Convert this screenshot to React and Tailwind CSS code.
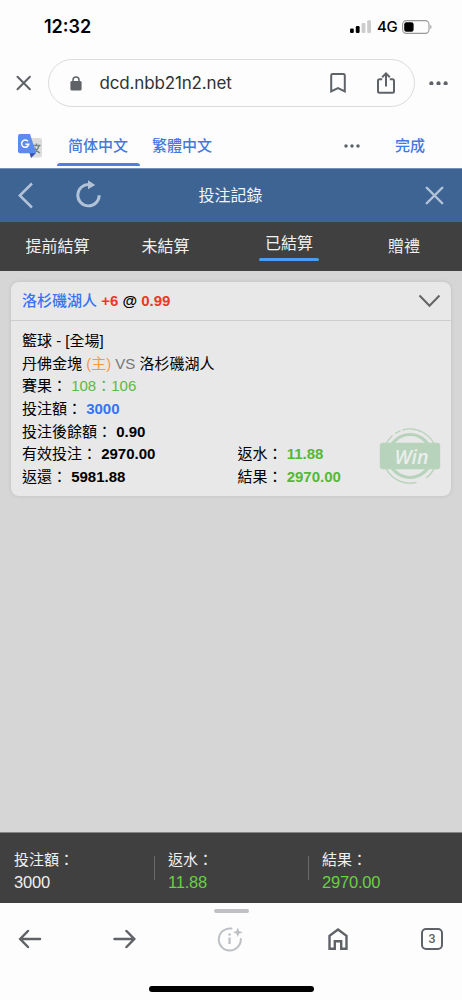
import { X } from "lucide-react";

// --- BROWSER CHROME ---
function StatusBar() {
  return (
    <div className="flex h-[53px] items-center justify-between pl-[44px] pr-[29px]">
      <span className="font-['Inter'] text-[18px] font-semibold leading-none text-black">12:32</span>
      <div className="flex items-center">
        <svg width="21" height="14" viewBox="0 0 21 14">
          <rect x="0" y="8.5" width="3.8" height="4.5" rx="1.2" fill="#000" />
          <rect x="5.8" y="6" width="3.8" height="7" rx="1.2" fill="#000" />
          <rect x="11.6" y="3" width="3.8" height="10" rx="1.2" fill="#ccc" />
          <rect x="17.2" y="0.2" width="3.8" height="12.8" rx="1.2" fill="#ccc" />
        </svg>
        <span className="ml-[6px] w-[25px] font-['Inter'] text-[15px] font-medium leading-none tracking-[-0.3px] text-black">4G</span>
        <svg width="31" height="14" viewBox="0 0 31 14">
          <rect x="0.6" y="0.6" width="26.4" height="12.8" rx="3.8" fill="none" stroke="#999" strokeWidth="1.1" />
          <rect x="2.2" y="2.2" width="9.4" height="9.6" rx="2.2" fill="#000" />
          <path d="M28.4 4.8c1.4.5 1.4 3.9 0 4.4z" fill="#999" />
        </svg>
      </div>
    </div>
  );
}

function Dots({ size }) {
  return (
    <svg width={size} height={size / 4} viewBox="0 0 20 5" fill="#5f6368">
      <circle cx="2.5" cy="2.5" r="2.2" />
      <circle cx="10" cy="2.5" r="2.2" />
      <circle cx="17.5" cy="2.5" r="2.2" />
    </svg>
  );
}

function AddressBar() {
  return (
    <div className="flex h-[60px] items-center">
      <div className="flex w-[47.5px] justify-center">
        <svg width="16" height="16" viewBox="0 0 16 16" stroke="#5f6368" strokeWidth="2" strokeLinecap="round">
          <path d="M1.5 1.8l12.4 12.4M13.9 1.8L1.5 14.2" />
        </svg>
      </div>
      <div className="flex h-[48px] w-[367px] items-center rounded-full border border-[#dadce0] pl-[21px] pr-[17px]">
        <svg width="12" height="15" viewBox="0 0 12 15">
          <rect x="0.4" y="5" width="11.2" height="9.4" rx="1.5" fill="#5f6368" />
          <path d="M3 5.5V4a3 3 0 0 1 6 0v1.5" fill="none" stroke="#5f6368" strokeWidth="1.5" />
        </svg>
        <span className="ml-[18px] font-['Inter'] text-[17px] leading-none tracking-[-0.15px] text-[#303134]">dcd.nbb21n2.net</span>
        <svg className="ml-auto" width="18" height="22" viewBox="0 0 18 22">
          <path d="M2.2 19.3V3.4c0-.8.6-1.4 1.4-1.4h10.8c.8 0 1.4.6 1.4 1.4v15.9L9 16.1z" fill="none" stroke="#5f6368" strokeWidth="2" />
        </svg>
        <svg className="ml-[28px]" width="22" height="24" viewBox="0 0 22 24" fill="none" stroke="#5f6368" strokeWidth="2">
          <path d="M7.2 8.3H4.5c-.9 0-1.5.6-1.5 1.5v10.4c0 .9.6 1.5 1.5 1.5h13c.9 0 1.5-.6 1.5-1.5V9.8c0-.9-.6-1.5-1.5-1.5h-2.7" />
          <path d="M11 15.5V2.8M7.2 6.2L11 2.4l3.8 3.8" />
        </svg>
      </div>
      <div className="ml-[14px] flex">
        <Dots size={19} />
      </div>
    </div>
  );
}

function TranslateBar() {
  return (
    <div className="flex h-[55px] pl-[17px] text-[15px] font-medium text-[#4278e2]">
      <svg className="mt-[20px]" width="26" height="26" viewBox="0 0 26 26">
        <path d="M9 5h14a2 2 0 0 1 2 2v15.5a2 2 0 0 1-2 2H14z" fill="#dcdcdc" />
        <path d="M15.5 12.5h8M19.5 10.5v2M22 12.5c-.8 3.5-3 6-5.5 7.5M17.5 14.5c1 2.5 3 4.5 5.5 5.5" fill="none" stroke="#6f8587" strokeWidth="1.3" />
        <path d="M12.5 20h6.5l-5 5z" fill="#3b4fb0" />
        <path d="M3 1h10l6.2 19.3H3a2 2 0 0 1-2-2V3a2 2 0 0 1 2-2z" fill="#5b8bef" />
        <path d="M11 8.3a3.6 3.6 0 1 0 .8 2.9H8.4" fill="none" stroke="#fff" strokeWidth="1.5" />
      </svg>
      <div className="ml-[13.5px] flex w-[83px] flex-col items-center">
        <span className="mt-[20px] h-[30px] font-['Noto_Sans_CJK_SC',sans-serif] leading-[24px]">简体中文</span>
        <span className="h-[3px] w-full rounded-t-sm bg-[#4d7fe6]" />
      </div>
      <span className="ml-[12.5px] mt-[21px] leading-[24px]">繁體中文</span>
      <div className="ml-[132px] mt-[31px]">
        <Dots size={16} />
      </div>
      <span className="ml-[35px] mt-[21px] leading-[24px]">完成</span>
    </div>
  );
}

// --- BET RECORDS PAGE ---
function PageHeader() {
  return (
    <div className="flex h-[54px] items-center border-t border-[#7590b5] bg-[#3e6494] text-[#b2c3d8]">
      <svg className="ml-[17px]" width="18" height="28" viewBox="0 0 18 28" fill="none" stroke="currentColor" strokeWidth="2.5">
        <path d="M15 1.5L2.8 13.5 15 25.5" />
      </svg>
      <svg className="mb-[4px] ml-[40px]" width="28" height="28" viewBox="0 0 28 28">
        <path d="M14.2 4.5A10.7 10.7 0 1 0 24.2 15.2" fill="none" stroke="currentColor" strokeWidth="2.9" />
        <path d="M13 0.3l7.2 4.7L13 9.3z" fill="currentColor" />
      </svg>
      <h1 className="ml-[95.5px] text-[16px] leading-[24px] text-[#f2f5f9]">投注記錄</h1>
      <X className="ml-auto mr-[12px]" size={31} strokeWidth={1.9} />
    </div>
  );
}

const tabs = [
  { name: "提前結算", width: "w-[115px]" },
  { name: "未結算", width: "w-[101px]" },
  { name: "已結算", width: "w-[146px]" },
  { name: "贈禮", width: "w-[84px]" },
];

function Tabs({ active }) {
  return (
    <div className="flex h-[49px] items-center bg-[#404040] text-[16px] leading-[24px] text-[#f0f0f0]">
      {tabs.map((tab) => (
        <div key={tab.name} className={`flex flex-col items-center ${tab.width}`}>
          <span>{tab.name}</span>
          {tab.name === active && <span className="mt-[2px] h-[3px] w-[60px] rounded-full bg-[#489ff0]" />}
        </div>
      ))}
    </div>
  );
}

function Row({ label, value, className }) {
  return (
    <p className="whitespace-nowrap">
      {label}： <span className={className}>{value}</span>
    </p>
  );
}

function WinStamp() {
  return (
    <svg className="mb-[4px]" width="62" height="58" viewBox="0 0 62 58" fill="none" stroke="#b7d3bb">
      <circle cx="31" cy="29" r="21.5" strokeWidth="3.2" />
      <path d="M23.5 3A27 27 0 0 1 57 22" strokeWidth="1.3" />
      <path d="M16 6.5l5.5-2.8M6.5 18A27 27 0 0 1 13.5 8.6" strokeWidth="1.3" />
      <path d="M5 36A27 27 0 0 0 37.5 55.4M47 51A27 27 0 0 0 57 37" strokeWidth="1.3" />
      <rect x="0.8" y="15.7" width="60.4" height="26.5" rx="3" fill="#b7d3bb" stroke="none" />
      <text
        x="32.5"
        y="36.5"
        textAnchor="middle"
        fill="#ebeeeb"
        stroke="none"
        className="font-['Open_Sans',sans-serif] text-[20px] font-semibold italic"
        textLength="34"
        lengthAdjust="spacingAndGlyphs"
      >
        Win
      </text>
    </svg>
  );
}

function BetCard() {
  return (
    <div className="rounded-[8px] bg-[#e8e8e8] text-[15px] text-black shadow-[0_0_4px_rgba(0,0,0,0.1)]">
      <div className="flex h-[39px] items-center justify-between border-b border-[#cecece] pl-[11px] pr-[10px]">
        <div className="font-bold">
          <span className="font-medium text-[#3673f5]">洛杉磯湖人</span> <span className="text-[#ee3528]">+6</span> @{" "}
          <span className="text-[#ee3528]">0.99</span>
        </div>
        <svg width="23" height="14" viewBox="0 0 23 14" fill="none" stroke="#666" strokeWidth="2.1">
          <path d="M1.5 1.5l10 10.3 10-10.3" />
        </svg>
      </div>
      <div className="flex h-[175px] items-end justify-between pb-[7.5px] pl-[11px] pr-[10px] leading-[22.65px]">
        <div className="w-[215.5px]">
          <p>籃球 - [全場]</p>
          <p className="whitespace-nowrap">
            丹佛金塊 <span className="text-[#f69a42]">(主)</span> <span className="text-[#777]">VS</span> 洛杉磯湖人
          </p>
          <Row label="賽果" value="108：106" className="text-[#5cb848]" />
          <Row label="投注額" value="3000" className="font-bold text-[#3673f5]" />
          <Row label="投注後餘額" value="0.90" className="font-bold" />
          <Row label="有效投注" value="2970.00" className="font-bold" />
          <Row label="返還" value="5981.88" className="font-bold" />
        </div>
        <div className="flex-1">
          <Row label="返水" value="11.88" className="font-bold text-[#55b837]" />
          <Row label="結果" value="2970.00" className="font-bold text-[#55b837]" />
        </div>
        <WinStamp />
      </div>
    </div>
  );
}

const totals = [
  { label: "投注額", value: "3000", color: "text-[#f0f0f0]" },
  { label: "返水", value: "11.88", color: "text-[#67d144]" },
  { label: "結果", value: "2970.00", color: "text-[#67d144]" },
];

function Totals() {
  return (
    <div className="grid h-[71px] grid-cols-3 items-center border-t border-[#858585] bg-[#404040]">
      {totals.map((t, i) => (
        <div key={t.label} className="relative pl-[14px] pt-[5px] text-[15px] leading-[22px] text-[#f0f0f0]">
          {i > 0 && <span className="absolute left-0 top-[12px] h-[24px] w-px bg-[#6b6b6b]" />}
          <p>{t.label}：</p>
          <p className={`text-[16.5px] tracking-[-0.2px] ${t.color}`}>{t.value}</p>
        </div>
      ))}
    </div>
  );
}

function BottomToolbar() {
  return (
    <div className="flex flex-1 flex-col items-center">
      <span className="mt-[6px] h-[4px] w-[35px] rounded-full bg-[#bfc1c7]" />
      <div className="mt-[12px] flex h-[28px] w-full items-center pl-[18px]">
        <svg width="24" height="20" viewBox="0 0 24 20" fill="none" stroke="#5f6368" strokeWidth="2.5" strokeLinecap="round">
          <path d="M22 10H2.5M10 2L2.2 10l7.8 8" />
        </svg>
        <svg className="ml-[70px]" width="24" height="20" viewBox="0 0 24 20" fill="none" stroke="#5f6368" strokeWidth="2.5" strokeLinecap="round">
          <path d="M2.5 10h19.5M14.5 2l7.8 8-7.8 8" />
        </svg>
        <svg className="ml-[81px]" width="26" height="26" viewBox="0 0 26 26" fill="none" stroke="#bdc1c6" strokeWidth="2">
          <path d="M14.5 2.6A11 11 0 1 0 23.8 13" strokeLinecap="round" />
          <path d="M12.5 11.5v6.5" strokeWidth="2.2" />
          <circle cx="12.5" cy="8.5" r="1.3" fill="#bdc1c6" stroke="none" />
          <path d="M20.8 1.5l1.4 3.4 3.4 1.4-3.4 1.4-1.4 3.4-1.4-3.4L16 6.3l3.4-1.4z" fill="#bdc1c6" stroke="none" />
        </svg>
        <svg className="ml-[83.5px]" width="22" height="24" viewBox="0 0 22 24" fill="none" stroke="#5f6368" strokeWidth="2.4">
          <path d="M2.5 21.8V8.8L11 2.5l8.5 6.3v13h-5.3v-7.5H7.8v7.5z" />
        </svg>
        <div className="ml-[72.5px] flex h-[22px] w-[22px] items-center justify-center rounded-[5px] border-2 border-[#5f6368] pt-px font-['Inter'] text-[11.5px] font-semibold leading-none text-[#5f6368]">
          3
        </div>
      </div>
      <span className="mt-[33px] h-[5.5px] w-[165px] rounded-full bg-black" />
    </div>
  );
}

function App() {
  return (
    <div className="flex h-[1000px] w-[462px] flex-col overflow-hidden bg-[#fdfdfd] font-['Liberation_Sans','Noto_Sans_CJK_TC',sans-serif]">
      <StatusBar />
      <AddressBar />
      <TranslateBar />
      <PageHeader />
      <Tabs active="已結算" />
      <main className="h-[561px] bg-[#d6d6d6] pl-[11px] pr-[11px] pt-[11px]">
        <BetCard />
      </main>
      <Totals />
      <BottomToolbar />
    </div>
  );
}

export default App;
